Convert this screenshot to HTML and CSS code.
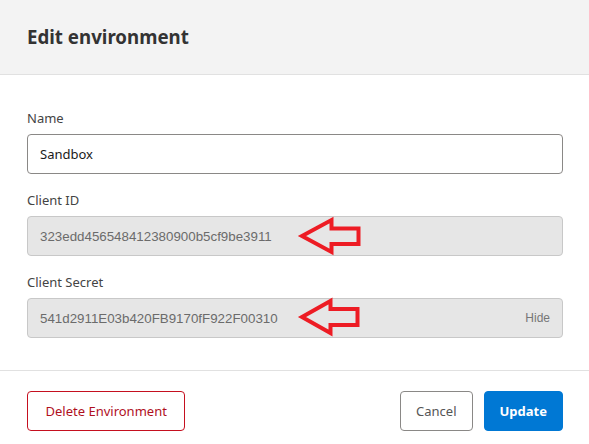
FILE: index.html
```html
<!DOCTYPE html>
<html lang="en">
<head>
<meta charset="utf-8">
<title>Edit environment</title>
<link rel="stylesheet" href="styles.css">
</head>
<body>
<div class="dialog">
  <header class="dlg-header">
    <h1 class="dlg-title">Edit environment</h1>
  </header>
  <div class="dlg-body">
    <div class="field">
      <div class="field-label">Name</div>
      <div class="input"><span class="input-text">Sandbox</span></div>
    </div>
    <div class="field">
      <div class="field-label">Client ID</div>
      <div class="input input-disabled">
        <span class="input-text">323edd456548412380900b5cf9be3911</span>
        <svg class="annot-arrow" width="64" height="40" viewBox="0 0 64 40"><polygon points="5,20 34.5,4 34.5,12.5 61.5,12.5 61.5,28 34.5,28 34.5,36" fill="none" stroke="#ed1c24" stroke-width="4" stroke-linejoin="miter"/></svg>
      </div>
    </div>
    <div class="field">
      <div class="field-label">Client Secret</div>
      <div class="input input-disabled">
        <span class="input-text">541d2911E03b420FB9170fF922F00310</span>
        <span class="input-action">Hide</span>
        <svg class="annot-arrow annot-arrow-2" width="64" height="40" viewBox="0 0 64 40"><polygon points="5,20 33.5,4 33.5,12 60.5,12 60.5,28 33.5,28 33.5,36" fill="none" stroke="#ed1c24" stroke-width="4" stroke-linejoin="miter"/></svg>
      </div>
    </div>
  </div>
  <footer class="dlg-footer">
    <button class="btn btn-danger">Delete Environment</button>
    <div class="footer-actions">
      <button class="btn btn-default">Cancel</button>
      <button class="btn btn-primary">Update</button>
    </div>
  </footer>
</div>
</body>
</html>
```
FILE: styles.css
```css
html, body {
  margin: 0;
  padding: 0;
  background: #ffffff;
}
body {
  font-family: "Noto Sans", "Open Sans", sans-serif;
  color: #333333;
}
.dialog {
  width: 589px;
}
.dlg-header {
  height: 74px;
  background: #f3f3f3;
  border-bottom: 1px solid #e1e1e1;
  padding: 0 27px;
  display: flex;
  align-items: center;
}
.dlg-title {
  margin: 0;
  font-size: 18.7px;
  font-weight: 700;
  color: #333333;
  line-height: 24px;
}
.dlg-body {
  padding: 33px 26px 32px 27px;
  display: flex;
  flex-direction: column;
  gap: 16px;
  border-bottom: 1px solid #e1e1e1;
}
.field {
  display: flex;
  flex-direction: column;
  gap: 6px;
}
.field-label {
  font-size: 13px;
  line-height: 20px;
  color: #444444;
}
.input {
  position: relative;
  height: 40px;
  box-sizing: border-box;
  border: 1px solid #8a8886;
  border-radius: 4px;
  padding: 0 12px;
  display: flex;
  align-items: center;
  background: #ffffff;
}
.input-text {
  font-size: 13px;
  color: #1a1a1a;
}
.input-disabled {
  background: #e6e6e6;
  border-color: #c8c8c8;
}
.input-disabled .input-text {
  font-family: "Liberation Sans", Arial, sans-serif;
  font-size: 13.333px;
  color: #6b6b6b;
}
.input-action {
  margin-left: auto;
  font-family: "Liberation Sans", Arial, sans-serif;
  font-size: 12px;
  color: #767676;
}
.annot-arrow {
  position: absolute;
  left: 269px;
  top: -1px;
}
.annot-arrow-2 {
  top: -2px;
}
.dlg-footer {
  padding: 20px 26px 0 27px;
  display: flex;
  align-items: center;
}
.footer-actions {
  margin-left: auto;
  display: flex;
  gap: 11px;
}
.btn {
  height: 40px;
  box-sizing: border-box;
  border-radius: 4px;
  padding: 0 15px;
  font-family: "Noto Sans", "Open Sans", sans-serif;
  font-size: 13px;
  background: #ffffff;
  cursor: pointer;
}
.btn-danger {
  border: 1px solid #c50f1f;
  color: #b0101e;
  padding: 0 17.5px;
}
.btn-default {
  border: 1px solid #8a8886;
  color: #555555;
}
.btn-primary {
  border: 1px solid #0078d4;
  background: #0078d4;
  color: #ffffff;
  font-weight: 700;
}
```
